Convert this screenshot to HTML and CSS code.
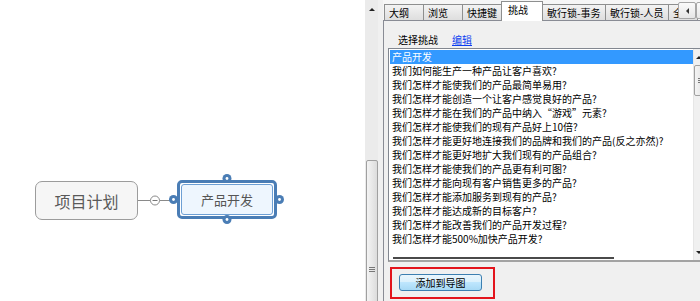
FILE: index.html
```html
<!DOCTYPE html>
<html lang="zh-CN">
<head>
    <meta charset="UTF-8">
    <meta name="viewport" content="width=device-width, initial-scale=1.0">
    <title>挑战 - 思维导图</title>
    <link rel="stylesheet" href="styles.css">
</head>
<body>

    <div class="app">
        <div class="canvas">
            <div class="topic topicRoot">项目计划</div>
            <div class="topic topicSelected"><div class="topicInner">产品开发</div></div>

            <svg class="links" width="365" height="301" viewBox="0 0 365 301">
                <line x1="138" y1="200.5" x2="150.5" y2="200.5" stroke="#8a8a8a" stroke-width="1"/>
                <line x1="159.5" y1="200.5" x2="173" y2="200.5" stroke="#8a8a8a" stroke-width="1"/>
                <circle cx="155" cy="200.5" r="4.5" fill="#fff" stroke="#8a8a8a" stroke-width="1"/>
                <line x1="152.5" y1="200.5" x2="157.5" y2="200.5" stroke="#777" stroke-width="1"/>
                <!-- handles round the selected topic -->
                <g fill="#4a7db5">
                    <circle cx="227" cy="178.5" r="4.5"/>
                    <circle cx="227" cy="219.5" r="4.5"/>
                    <circle cx="173.5" cy="199.5" r="4.5"/>
                    <circle cx="279.5" cy="199.5" r="4.5"/>
                </g>
                <g fill="#fff">
                    <circle cx="227" cy="178.5" r="1.4"/>
                    <circle cx="227" cy="219.5" r="1.4"/>
                    <circle cx="173.5" cy="199.5" r="1.4"/>
                    <circle cx="279.5" cy="199.5" r="1.4"/>
                </g>
            </svg>
        </div>

        <div class="vScroll">
            <div class="scrollArrow"><span class="tri triUp"></span></div>
            <div class="scrollThumb"><span class="grip"></span></div>
        </div>

        <div class="panel">
            <div class="tabs">
                <div class="tab tabNarrow">大纲</div>
                <div class="tab tabNarrow">浏览</div>
                <div class="tab tabNarrow">快捷键</div>
                <div class="tab tabActive">挑战</div>
                <div class="tab tabWide">敏行锁-事务</div>
                <div class="tab tabWide">敏行锁-人员</div>
                <div class="tab tabCut">全</div>
                <div class="tabArrows">
                    <span class="tabArrow"><span class="tri triLeft"></span></span>
                    <span class="tabArrow"><span class="tri triRight"></span></span>
                </div>
            </div>

            <div class="tabBody">
                <div class="picker">
                    <span>选择挑战</span>
                    <a href="#" class="editLink">编辑</a>
                </div>

                <div class="listBox">
                    <div class="listItems">
                        <ul class="challengeList">
                            <li class="selected">产品开发</li>
                            <li>我们如何能生产一种产品让客户喜欢?</li>
                            <li>我们怎样才能使我们的产品最简单易用?</li>
                            <li>我们怎样才能创造一个让客户感觉良好的产品?</li>
                            <li>我们怎样才能在我们的产品中纳入“游戏”元素?</li>
                            <li>我们怎样才能使我们的现有产品好上10倍?</li>
                            <li>我们怎样才能更好地连接我们的品牌和我们的产品(反之亦然)?</li>
                            <li>我们怎样才能更好地扩大我们现有的产品组合?</li>
                            <li>我们怎样才能使我们的产品更有利可图?</li>
                            <li>我们怎样才能向现有客户销售更多的产品?</li>
                            <li>我们怎样才能添加服务到现有的产品?</li>
                            <li>我们怎样才能达成新的目标客户?</li>
                            <li>我们怎样才能改善我们的产品开发过程?</li>
                            <li>我们怎样才能500%加快产品开发?</li>
                        </ul>
                        <div class="hBar"></div>
                    </div>
                    <div class="listScroll">
                        <div class="listArrow"><span class="tri triUp"></span></div>
                        <div class="listThumb"><span class="grip"></span></div>
                        <div class="listArrow listArrowDown"><span class="tri triDown"></span></div>
                    </div>
                </div>

                <div class="actions">
                    <div class="marked">
                        <button type="button" class="addButton">添加到导图</button>
                    </div>
                </div>
            </div>
        </div>
    </div>

</body>
</html>
```

FILE: styles.css
```css
* {
    box-sizing: border-box;
}

body {
    margin: 0;
    width: 700px;
    height: 301px;
    overflow: hidden;
    background-color: #fff;
    font-family: "Noto Sans CJK SC", "Liberation Sans", sans-serif;
    font-size: 10px;
    color: #000;
}

.app {
    display: flex;
    height: 301px;
}

/* mind map canvas */
.canvas {
    position: relative;
    flex: none;
    width: 365px;
    height: 301px;
    background-color: #fff;
}

.topic {
    position: absolute;
    display: flex;
    align-items: center;
    justify-content: center;
}

.topicRoot {
    left: 35px;
    top: 181px;
    width: 103px;
    height: 39px;
    border: 1.5px solid #9c9c9c;
    border-radius: 7px;
    background-color: #f6f6f6;
    font-size: 16px;
    color: #5a5a5a;
}

.topicSelected {
    left: 177px;
    top: 180px;
    width: 100px;
    height: 39px;
    padding: 1px;
    border: 3px solid #4a7db5;
    border-radius: 5px;
    background-color: #fff;
}

.topicInner {
    display: flex;
    align-items: center;
    justify-content: center;
    width: 100%;
    height: 100%;
    border: 1px solid #6d9fd4;
    border-radius: 3px;
    background-color: #eef6fe;
    font-size: 13px;
    color: #555;
}

.links {
    position: absolute;
    left: 0;
    top: 0;
    pointer-events: none;
}

/* small arrow triangles */
.tri {
    display: block;
    width: 0;
    height: 0;
    border: 3px solid transparent;
}

.triUp {
    border-top: none;
    border-bottom: 3px solid #222;
}

.triDown {
    border-bottom: none;
    border-top: 3px solid #222;
}

.triLeft {
    border-left: none;
    border-right: 3px solid #333;
}

.triRight {
    border-right: none;
    border-left: 3px solid #333;
}

/* canvas scrollbar */
.vScroll {
    flex: none;
    display: flex;
    flex-direction: column;
    align-items: center;
    width: 13px;
    background-color: #ebebeb;
}

.scrollArrow {
    display: flex;
    align-items: center;
    justify-content: center;
    height: 18px;
}

.scrollThumb {
    display: flex;
    align-items: flex-end;
    justify-content: center;
    width: 12px;
    flex: 1;
    margin-top: 142px;
    margin-bottom: -4px;
    padding-bottom: 32px;
    border: 1px solid #a0a0a0;
    border-radius: 2px;
    background: linear-gradient(to right, #f4f4f4, #dcdcdc);
}

.grip {
    display: block;
    width: 6px;
    height: 5px;
    border-top: 1px solid #777;
    border-bottom: 1px solid #777;
    background: linear-gradient(#777 0 1px, transparent 1px);
    background-position: 0 1px;
    background-repeat: no-repeat;
}

/* right panel */
.panel {
    flex: none;
    display: flex;
    flex-direction: column;
    width: 322px;
    padding-left: 5px;
    overflow: hidden;
    background-color: #f0f0f0;
}

.tabs {
    position: relative;
    display: flex;
    align-items: flex-end;
    height: 20px;
    padding-left: 1px;
    background-color: #f6f6f6;
}

.tab {
    flex: none;
    height: 16px;
    margin-right: -1px;
    padding-left: 4px;
    line-height: 15px;
    white-space: nowrap;
    border: 1px solid #8e8f8f;
    border-bottom: none;
    background: linear-gradient(#f3f3f3, #dedede);
}

.tabNarrow {
    width: 40px;
}

.tabWide {
    width: 64px;
}

.tabCut {
    width: 30px;
}

.tabActive {
    position: relative;
    z-index: 1;
    width: 42px;
    height: 20px;
    margin-bottom: -1px;
    padding-left: 6px;
    line-height: 15px;
    background: #fff;
}

.tabArrows {
    position: absolute;
    right: -14px;
    top: 2px;
    display: flex;
    z-index: 2;
}

.tabArrow {
    display: flex;
    align-items: center;
    justify-content: center;
    width: 18px;
    height: 17px;
    border: 1px solid #a6a6a6;
    border-radius: 2px;
    background: linear-gradient(#fafafa, #e6e6e6);
}

.tabBody {
    flex: 1;
    padding-left: 4px;
    border-top: 1px solid #898c95;
    border-left: 1px solid #898c95;
    background-color: #f0f0f0;
}

.picker {
    display: flex;
    gap: 14px;
    height: 27px;
    padding: 12px 0 0 10px;
    line-height: 14px;
}

.editLink {
    color: #0b3ef0;
    text-decoration: underline;
}

.listBox {
    display: flex;
    width: 323px;
    height: 214px;
    border: 1px solid #828790;
    border-bottom: 2px solid #a3a3a3;
    background-color: #fff;
}

.listItems {
    display: flex;
    flex-direction: column;
    flex: none;
    width: 304px;
    padding: 1px 0 1px 1px;
}

.challengeList {
    list-style: none;
    margin: 0;
    padding: 0;
}

.challengeList li {
    height: 14px;
    padding-left: 2px;
    line-height: 14px;
    white-space: nowrap;
    color: #000;
}

.challengeList li.selected {
    background-color: #3399ff;
    color: #fff;
}

.hBar {
    width: 221px;
    height: 2px;
    margin-top: auto;
    margin-left: 3px;
    background-color: #4a4a4a;
}

.listScroll {
    display: flex;
    flex-direction: column;
    align-items: flex-start;
    width: 17px;
    padding-left: 2px;
    background-color: #f0f0f0;
    border-left: 1px solid #e6e6e6;
}

.listArrow {
    display: flex;
    align-items: center;
    height: 16px;
}

.listArrowDown {
    margin-top: auto;
}

.listThumb {
    display: flex;
    align-items: center;
    justify-content: center;
    width: 14px;
    height: 31px;
    margin-left: -2px;
    border: 1px solid #a0a0a0;
    border-radius: 2px;
    background: linear-gradient(to right, #f4f4f4, #dcdcdc);
}

.actions {
    padding: 5px 0 0 2px;
}

.marked {
    width: 105px;
    height: 32px;
    padding: 5px 0 0 7px;
    border: 2px solid #e3141c;
}

.addButton {
    display: block;
    width: 83px;
    height: 17px;
    padding: 0;
    font-family: inherit;
    font-size: 10px;
    line-height: 15px;
    color: #000;
    border: 1px solid #3c7fb1;
    border-radius: 3px;
    background: linear-gradient(#eaf6fd 0%, #d9f0fc 50%, #bee6fd 50%, #a7d9f5 100%);
}
```
